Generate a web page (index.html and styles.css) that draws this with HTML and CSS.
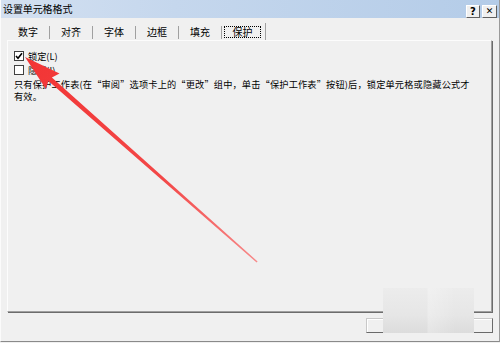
FILE: index.html
```html
<!DOCTYPE html>
<html lang="zh-CN">
<head>
<meta charset="utf-8">
<title>设置单元格格式</title>
<link rel="stylesheet" href="styles.css">
</head>
<body>
<div class="dialog">
  <div class="titlebar">
    <span class="title">设置单元格格式</span>
    <div class="tbtns">
      <span class="tbtn">?</span>
      <span class="tbtn close">✕</span>
    </div>
  </div>
  <div class="tabs">
    <span class="tab">数字</span>
    <span class="tab">对齐</span>
    <span class="tab">字体</span>
    <span class="tab">边框</span>
    <span class="tab">填充</span>
    <span class="tab active"><span class="focus">保护</span></span>
  </div>
  <div class="panel">
    <label class="check"><span class="box checked"><svg viewBox="0 0 8 8" width="8" height="8"><path d="M1 4 L3 6.2 L7 1.2" fill="none" stroke="#000" stroke-width="1.6"/></svg></span><span>锁定(L)</span></label>
    <label class="check"><span class="box"></span><span>隐藏(I)</span></label>
    <div class="note">
      <div class="line">只有保护工作表(在“审阅”选项卡上的“更改”组中，单击“保护工作表”按钮)后，锁定单元格或隐藏公式才</div>
      <div class="line">有效。</div>
    </div>
  </div>
  <div class="footer">
    <span class="btn"></span>
    <span class="btn"></span>
  </div>
  <div class="watermark"></div>
  <svg class="arrow" width="500" height="343" viewBox="0 0 500 343">
    <defs>
      <linearGradient id="g" x1="24" y1="56" x2="257" y2="262" gradientUnits="userSpaceOnUse">
        <stop offset="0" stop-color="#f23434"/>
        <stop offset="0.6" stop-color="#f34848"/>
        <stop offset="1" stop-color="#f78a8a"/>
      </linearGradient>
    </defs>
    <polygon fill="url(#g)" points="25,57 59.5,73.5 51.9,77.6 257.6,261.6 256.6,262.6 48.4,81.1 45.9,89"/>
  </svg>
</div>
</body>
</html>
```
FILE: styles.css
```css
* { box-sizing: border-box; }
html, body { margin: 0; padding: 0; background: #f0f0f0; }
body {
  font-family: "Noto Sans CJK SC", "Noto Sans", sans-serif;
  color: #000;
}
.dialog {
  position: relative;
  width: 500px;
  height: 342px;
  background: #f0f0f0;
  border-left: 1px solid #fbfbfb;
  border-right: 1px solid #9a9a9a;
  border-bottom: 1px solid #8a8a8a;
  overflow: hidden;
}
.titlebar {
  height: 18px;
  display: flex;
  align-items: center;
  justify-content: space-between;
  padding-left: 2px;
  background: linear-gradient(to right, #d3e0f1 0%, #c5d7ed 35%, #b4cce8 100%);
}
.title {
  font-size: 10px;
  line-height: 12px;
  letter-spacing: -0.1px;
}
.tbtns {
  display: flex;
  gap: 2px;
  margin-right: 2px;
  margin-top: 4px;
}
.tbtn {
  width: 14px;
  height: 13px;
  background: #f0f0f0;
  border-top: 1px solid #fff;
  border-left: 1px solid #fff;
  border-right: 1px solid #606060;
  border-bottom: 1px solid #606060;
  font-family: "DejaVu Sans", sans-serif;
  font-weight: bold;
  font-size: 10px;
  line-height: 11px;
  text-align: center;
}
.tbtn.close { width: 15px; font-size: 9px; }
.tabs {
  display: flex;
  align-items: flex-end;
  height: 22px;
  margin-left: 6px;
}
.tab {
  width: 43px;
  height: 13px;
  margin-bottom: 1px;
  border-right: 1px solid #a0a0a0;
  font-size: 10px;
  line-height: 12px;
  text-align: center;
}
.tab.active {
  height: 17px;
  margin-bottom: 0;
  width: 44px;
  padding-top: 3px;
  display: flex;
  justify-content: center;
  align-items: flex-start;
}
.focus {
  display: block;
  width: 37px;
  height: 12px;
  outline: 1px dotted #000;
  outline-offset: -1px;
  line-height: 11px;
  margin-left: -2px;
}
.panel {
  margin-left: 6px;
  width: 485px;
  height: 272px;
  border-top: 1px solid #fcfcfc;
  border-left: 1px solid #fcfcfc;
  border-right: 1px solid #a0a0a0;
  border-bottom: 1px solid #a0a0a0;
  box-shadow: 1px 1px 0 #6c6c6c;
  padding: 8px 0 0 6px;
}
.check {
  display: flex;
  align-items: center;
  height: 14px;
  font-size: 9.2px;
  gap: 4px;
}
.check:first-child { height: 13px; margin-bottom: 1px; }
.box {
  width: 10px;
  height: 10px;
  background: #fff;
  border: 1px solid #404040;
  display: flex;
  align-items: center;
  justify-content: center;
}
.note {
  margin-top: 1px;
  font-size: 9.2px;
  letter-spacing: 0.17px;
  white-space: nowrap;
}
.line {
  height: 12px;
  line-height: 12px;
}
.footer {
  display: flex;
  justify-content: flex-end;
  gap: 7px;
  padding: 6px 6px 0 0;
}
.btn {
  width: 60px;
  height: 15px;
  background: #f0f0f0;
  border-top: 1px solid #c8c8c8;
  border-left: 1px solid #c8c8c8;
  border-right: 1px solid #6a6a6a;
  border-bottom: 1px solid #6a6a6a;
  box-shadow: inset 1px 1px 0 #fff;
}
.watermark {
  position: absolute;
  left: 382px;
  top: 288px;
  width: 91px;
  height: 45px;
  background:
    linear-gradient(to right, rgba(255,255,255,0) 48%, rgba(255,255,255,0.25) 50%, rgba(255,255,255,0) 80%),
    linear-gradient(to bottom, #ececec 0%, #e6e6e6 60%, #dcdcdc 100%);
}
.arrow {
  position: absolute;
  left: -1px;
  top: 0;
  pointer-events: none;
}
```
